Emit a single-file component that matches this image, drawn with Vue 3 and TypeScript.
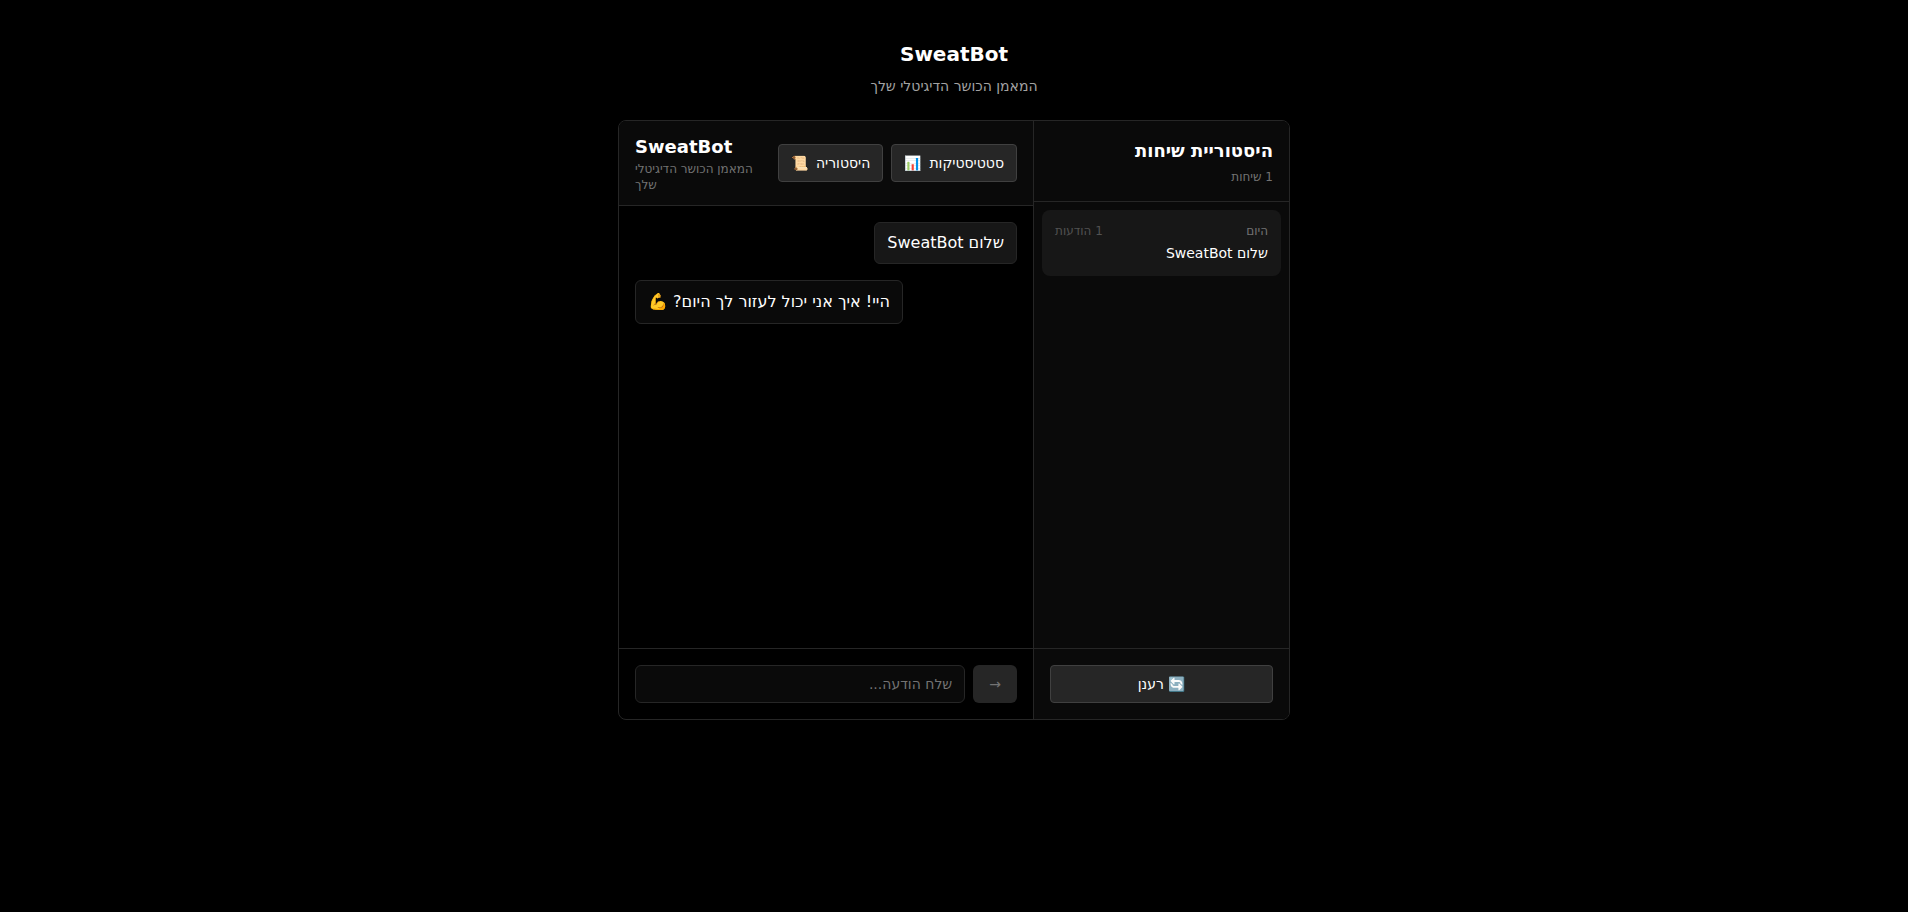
<script setup lang="ts">
import { ref } from 'vue'

interface Message {
  id: number
  role: 'user' | 'bot'
  text: string
}

interface Conversation {
  id: number
  day: string
  count: number
  title: string
}

const tagline = 'המאמן הכושר הדיגיטלי שלך'
const draft = ref('')

const actions = [
  { label: 'סטטיסטיקות', icon: '📊' },
  { label: 'היסטוריה', icon: '📜' },
]

const conversations = ref<Conversation[]>([
  { id: 1, day: 'היום', count: 1, title: 'שלום SweatBot' },
])

const messages = ref<Message[]>([
  { id: 1, role: 'user', text: 'שלום SweatBot' },
  { id: 2, role: 'bot', text: 'היי! איך אני יכול לעזור לך היום? 💪' },
])

function send() {
  const text = draft.value.trim()
  if (!text) return
  messages.value.push({ id: messages.value.length + 1, role: 'user', text })
  draft.value = ''
}
</script>

<template>
  <main class="page" dir="rtl">
    <header class="intro">
      <h1>SweatBot</h1>
      <p>{{ tagline }}</p>
    </header>

    <div class="panel">
      <aside class="sidebar">
        <div class="sidebar-head">
          <h2>היסטוריית שיחות</h2>
          <p>{{ conversations.length }} שיחות</p>
        </div>
        <div class="conversations">
          <div v-for="c in conversations" :key="c.id" class="conversation">
            <div class="meta">
              <span>{{ c.day }}</span>
              <span class="count">{{ c.count }} הודעות</span>
            </div>
            <div class="title">{{ c.title }}</div>
          </div>
        </div>
        <div class="sidebar-foot">
          <button type="button" class="btn refresh">🔄 רענן</button>
        </div>
      </aside>

      <section class="chat">
        <div class="chat-head">
          <div class="actions">
            <button v-for="a in actions" :key="a.label" type="button" class="btn action">
              <span>{{ a.label }}</span>
              <span>{{ a.icon }}</span>
            </button>
          </div>
          <div class="brand">
            <h2>SweatBot</h2>
            <p>{{ tagline }}</p>
          </div>
        </div>

        <div class="messages">
          <div v-for="m in messages" :key="m.id" class="bubble" :class="m.role">{{ m.text }}</div>
        </div>

        <form class="composer" @submit.prevent="send">
          <button type="submit" class="send" :disabled="!draft.trim()">→</button>
          <input v-model="draft" type="text" placeholder="שלח הודעה..." />
        </form>
      </section>
    </div>
  </main>
</template>

<style>
body {
  background: #000;
}
</style>

<style scoped>
* {
  box-sizing: border-box;
}

.page {
  min-height: 100vh;
  padding-top: 40px;
  display: flex;
  flex-direction: column;
  align-items: center;
  background: #000;
  color: #fff;
  font-family: "DejaVu Sans", sans-serif;
  font-size: 16px;
  line-height: 24px;
}

h1,
h2,
p {
  margin: 0;
}

button,
input {
  margin: 0;
  font-family: inherit;
  font-size: 14px;
  line-height: 20px;
}

.intro {
  margin-bottom: 24px;
  text-align: center;
}

.intro h1 {
  font-size: 20px;
  line-height: 28px;
}

.intro p {
  margin-top: 8px;
  font-size: 14px;
  line-height: 20px;
  color: #a3a3a3;
}

.panel {
  display: flex;
  width: 672px;
  height: 600px;
  border: 1px solid #262626;
  border-radius: 8px;
  overflow: hidden;
}

.sidebar {
  display: flex;
  flex-direction: column;
  flex: none;
  width: 256px;
  background: #0a0a0a;
  border-left: 1px solid #262626;
}

.sidebar-head {
  padding: 16px;
  border-bottom: 1px solid #262626;
}

h2 {
  font-size: 18px;
  line-height: 28px;
}

.sidebar-head p,
.brand p {
  font-size: 12px;
  line-height: 16px;
  color: #737373;
}

.sidebar-head p {
  margin-top: 4px;
}

.conversations {
  flex: 1;
  padding: 8px;
}

.conversation {
  padding: 12px;
  border: 1px solid transparent;
  border-radius: 8px;
  background: #171717;
}

.meta {
  display: flex;
  justify-content: space-between;
  margin-bottom: 4px;
  font-size: 12px;
  line-height: 16px;
  color: #737373;
}

.count {
  color: #525252;
}

.title {
  font-size: 14px;
  line-height: 20px;
}

.sidebar-foot {
  padding: 16px;
  border-top: 1px solid #262626;
}

.btn {
  height: 38px;
  padding: 8px 12px;
  border: 1px solid #404040;
  border-radius: 4px;
  background: #262626;
  color: #fff;
}

.refresh {
  display: block;
  width: 100%;
}

.chat {
  display: flex;
  flex-direction: column;
  flex: 1;
  min-width: 0;
}

.chat-head {
  display: flex;
  align-items: center;
  justify-content: space-between;
  padding: 12px 16px;
  background: #0a0a0a;
  border-bottom: 1px solid #262626;
}

.actions {
  display: flex;
  flex: none;
  gap: 8px;
}

.action {
  display: flex;
  align-items: center;
  gap: 8px;
}

.brand {
  width: 126px;
  direction: ltr;
}

.messages {
  display: flex;
  flex-direction: column;
  flex: 1;
  gap: 16px;
  padding: 16px;
}

.bubble {
  padding: 8px 12px;
  max-width: 85%;
  border: 1px solid #262626;
  border-radius: 6px;
  white-space: pre-wrap;
}

.user {
  align-self: flex-start;
  background: #171717;
}

.bot {
  align-self: flex-end;
  background: #0a0a0a;
  line-height: 26px;
}

.composer {
  display: flex;
  gap: 8px;
  padding: 16px;
  border-top: 1px solid #262626;
}

.send {
  padding: 8px 16px;
  border: 0;
  border-radius: 6px;
  background: #262626;
  color: #737373;
}

.composer input {
  flex: 1;
  min-width: 0;
  height: 38px;
  padding: 8px 12px;
  border: 1px solid #262626;
  border-radius: 6px;
  outline: none;
  background: #0a0a0a;
  color: #fff;
}

.composer input::placeholder {
  color: #737373;
}
</style>
